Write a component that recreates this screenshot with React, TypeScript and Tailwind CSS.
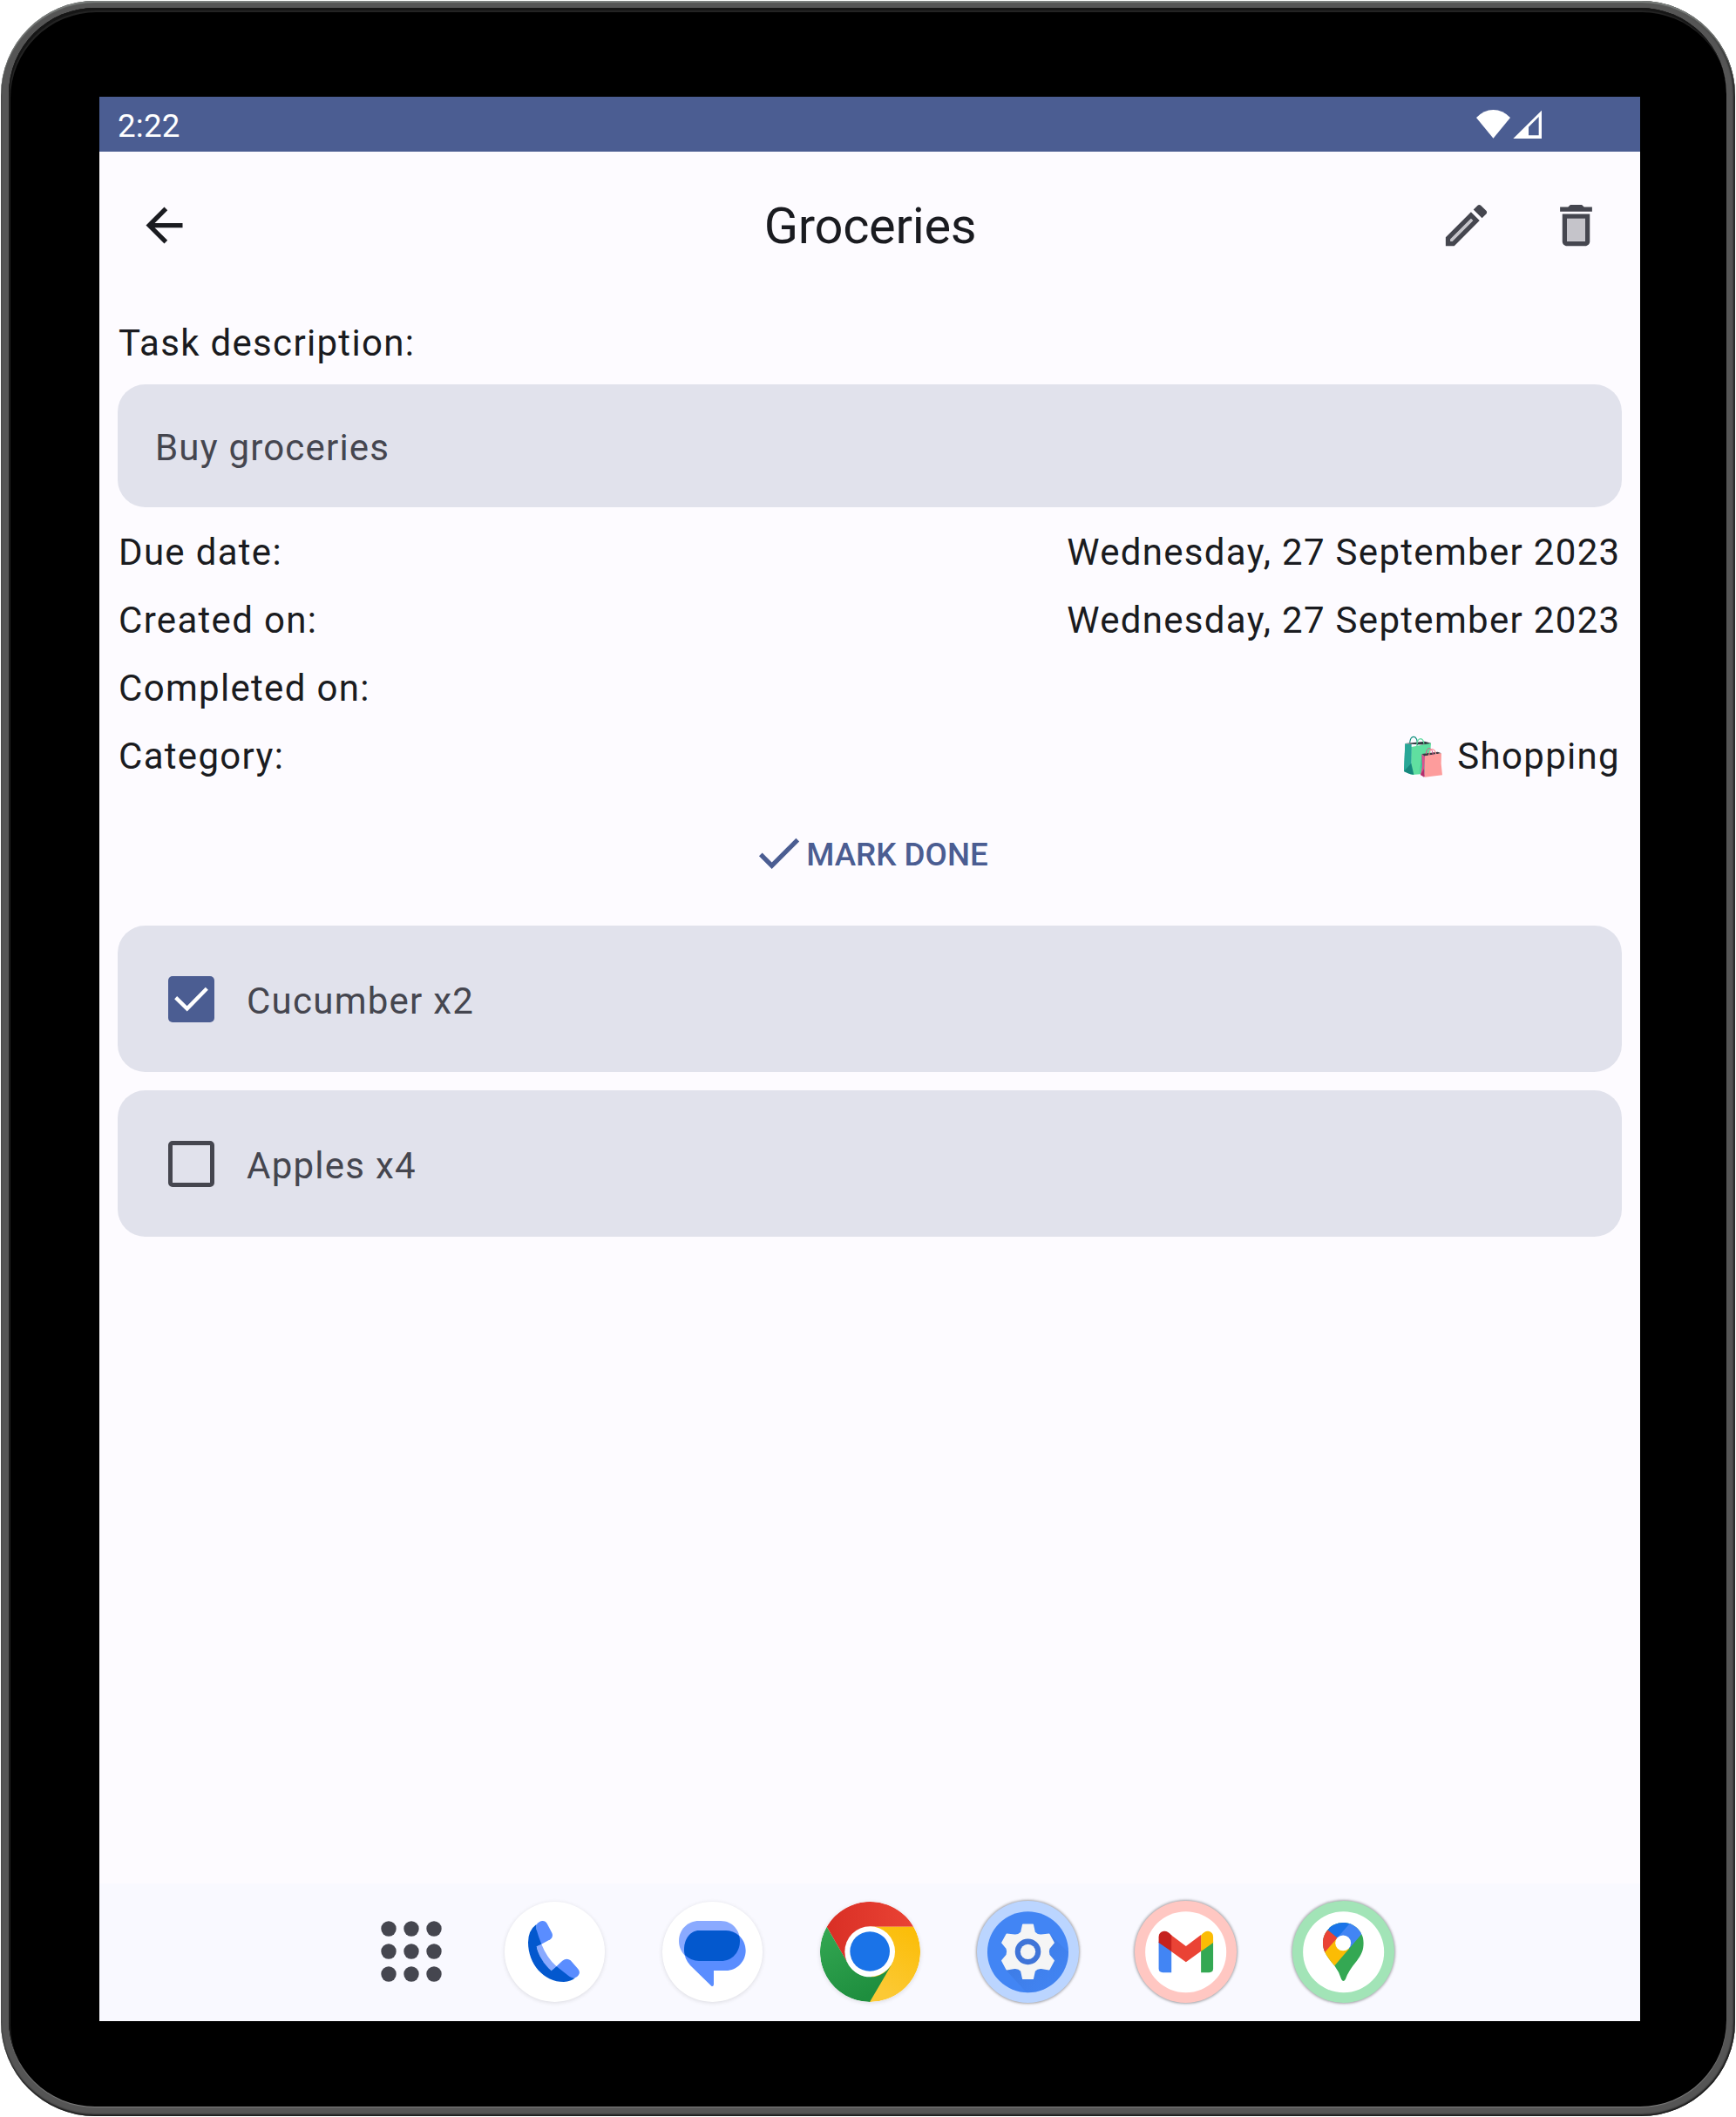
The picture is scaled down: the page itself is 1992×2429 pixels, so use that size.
import React from "react";

const details = [
  { label: "Due date:", value: "Wednesday, 27 September 2023" },
  { label: "Created on:", value: "Wednesday, 27 September 2023" },
  { label: "Completed on:", value: "" },
];

const items = [
  { label: "Cucumber x2", done: true },
  { label: "Apples x4", done: false },
];

function StatusIcons() {
  return (
    <svg className="mr-[113px] mb-[1px] h-[33px] w-[75px]" viewBox="282 105 225 99" fill="#fff">
      <path d="M282 132Q308 105 340.500 105T399 132L340.500 203Z" />
      <path fillRule="evenodd" d="M507 107V204H409ZM497 129L462 164V193H497Z" />
    </svg>
  );
}

function ShoppingBags() {
  return (
    <svg className="mr-[16px] h-[48px] w-[46px]" viewBox="33 21 138 144" fill="none">
      <path d="M56 46Q58 24 70 25Q82 26 83 55" stroke="#12917f" strokeWidth="3.500" />
      <path d="M40 49L62 50L61 155L36 144Z" fill="#28a797" />
      <path d="M62 50L40 48L108 41L129 47L126 54Z" fill="#323b41" />
      <path d="M62 60L129 47L126 90L105 153L61 156Z" fill="#60dfa0" />
      <path d="M40 49L62 60L61 118L36 144Z" fill="#28a797" />
      <path d="M61 116L70 156L50 151L36 144Z" fill="#16877d" />
      <path d="M80 62Q80 32 93 32Q103 33 105 50" stroke="#5fdca0" strokeWidth="3.500" />
      <path d="M97 85L105 86L106 164L94 156L98 120L88 154Q95 120 97 85Z" fill="#3cbf98" />
      <path d="M97 85L108 92L105 164L93 156L99 125Z" fill="#dd4f8e" />
      <path d="M105 135L108 163L93 156Z" fill="#b52d6c" />
      <path d="M98 84L152 77L165 82L108 92Z" fill="#3b3a42" />
      <path d="M108 91L165 82L164 118L168 157L107 164Z" fill="#fd9c9c" />
      <path d="M112 84Q114 63 124 65Q134 67 136 88" stroke="#e0568c" strokeWidth="3" />
      <path d="M122 90Q124 67 134 68Q143 70 146 84" stroke="#fb9298" strokeWidth="3.500" />
    </svg>
  );
}

function AppGrid() {
  return (
    <svg className="h-[70px] w-[70px]" viewBox="0 0 70 70" fill="#45464f">
      {[9, 35, 61].map((y) =>
        [9, 35, 61].map((x) => <circle key={`${x}-${y}`} cx={x} cy={y} r="8.700" />)
      )}
    </svg>
  );
}

function PhoneIcon() {
  return (
    <svg className="h-full w-full" viewBox="477 96 345 345">
      <path d="M586 176Q596 162 608 162Q618 162 623 171L640 203Q646 216 634 226L602 243L585 250Z" fill="#5a8dff" />
      <path d="M587 250L604 242Q622 288 656 319L636 334Q598 300 587 250Z" fill="#8aaaff" />
      <path d="M656 318L676 299Q691 288 704 298L729 326Q738 337 733 346Q728 358 712 359L660 350L637 334Z" fill="#5a8dff" />
      <path d="M586 174Q558 195 558 236C558 310 612 372 681 372Q706 371 720 358Q710 360 700 353L656 319L638 334C612 311 593 280 587 250L604 242Q593 215 586 190Z" fill="#0358ce" />
    </svg>
  );
}

function MessagesIcon() {
  return (
    <svg className="h-full w-full" viewBox="1020 96 345 345">
      <path d="M1146 162H1221C1262 162 1287 195 1287 231C1287 268 1262 300 1221 300H1146C1107 300 1077 270 1077 231C1077 192 1107 162 1146 162Z" fill="#8aaaff" />
      <path d="M1150 195H1239C1277 195 1307 226 1307 264C1307 302 1277 333 1239 333H1197V381Q1196 389 1189 386L1116 315Q1095 292 1095 262C1095 224 1116 195 1150 195Z" fill="#5a8dff" />
      <path d="M1147 195H1239Q1265 196 1284 213Q1287 222 1287 231C1287 268 1262 300 1221 300H1146Q1119 300 1098 280Q1095 272 1095 262C1095 224 1116 195 1147 195Z" fill="#0358ce" />
    </svg>
  );
}

function ChromeIcon() {
  return (
    <svg className="h-full w-full" viewBox="123 96 345 345">
      <defs>
        <linearGradient id="chrome-red" x1="0" x2="1" y1="0" y2="0">
          <stop stopColor="#d92f25" />
          <stop offset="1" stopColor="#ea4335" />
        </linearGradient>
        <linearGradient id="chrome-green" x1="0" x2="0.500" y1="0" y2="1">
          <stop stopColor="#34a853" />
          <stop offset="1" stopColor="#1e8e3e" />
        </linearGradient>
        <linearGradient id="chrome-yellow" x1="1" x2="0.600" y1="0" y2="1">
          <stop stopColor="#fbbc04" />
          <stop offset="1" stopColor="#fcc934" />
        </linearGradient>
      </defs>
      <path d="M295.500 268.500L220 311L146 182A172.500 172.500 0 0 1 445 182L295.500 182Z" fill="url(#chrome-red)" />
      <path d="M295.500 182H445A172.500 172.500 0 0 1 294 441L300 350L370 311L295.500 268.500Z" fill="url(#chrome-yellow)" />
      <path d="M146 182L220.600 311.500A86 86 0 0 0 370 311.500L294 441A172.500 172.500 0 0 1 146 182Z" fill="url(#chrome-green)" />
      <circle cx="294.500" cy="267.500" r="86.500" fill="#fff" />
      <circle cx="294.500" cy="267" r="68.500" fill="#1a73e8" />
    </svg>
  );
}

function SettingsIcon() {
  return (
    <svg className="h-full w-full" viewBox="662 92 352 351">
      <defs>
        <clipPath id="settings-disc">
          <circle cx="838" cy="268" r="140" />
        </clipPath>
        <linearGradient id="settings-shade" x1="0" x2="1" y1="0" y2="1">
          <stop stopColor="#356ac8" stopOpacity="0.600" />
          <stop offset="1" stopColor="#4285f4" stopOpacity="0" />
        </linearGradient>
      </defs>
      <circle cx="838" cy="268" r="140" fill="#4285f4" />
      <path clipPath="url(#settings-disc)" d="M912 205L1010 300V460H880L762 330Z" fill="url(#settings-shade)" />
      <g transform="translate(838 267)">
        <circle r="52" fill="#3f74d8" />
        <path
          fill="#f5f5f5"
          stroke="#f5f5f5"
          strokeWidth="5"
          strokeLinejoin="round"
          fillRule="evenodd"
          d="M-17 -93H17L23 -66Q32 -56 46 -57L73 -60L89 -31L73 -12Q68 0 73 12L89 31L73 61L46 57Q32 56 23 66L17 93H-17L-23 66Q-32 56 -46 57L-73 61L-89 31L-73 12Q-68 0 -73 -12L-89 -31L-73 -60L-46 -57Q-32 -56 -23 -66ZM0 -47A47 47 0 1 0 0 47A47 47 0 1 0 0 -47Z"
        />
        <circle r="26" fill="#f5f5f5" />
      </g>
    </svg>
  );
}

function GmailIcon() {
  return (
    <svg className="h-full w-full" viewBox="125 92 352 351">
      <circle cx="301.500" cy="268" r="140" fill="#fff" />
      <path d="M208 232L252 262V339H222Q208 339 208 325Z" fill="#4285f4" />
      <path d="M396 232L354 262V339H382Q396 339 396 325Z" fill="#34a853" />
      <path d="M354 210Q366 195 379 196Q396 199 396 216V236L354 266Z" fill="#fbbc04" />
      <path d="M250 209L302 248L354 209V265L302 303L250 265Z" fill="#ea4335" />
      <path d="M252 210Q240 195 226 196Q208 199 208 216V236L252 266Z" fill="#c5221f" />
    </svg>
  );
}

function MapsIcon() {
  return (
    <svg className="h-full w-full" viewBox="668 92 352 351">
      <defs>
        <clipPath id="maps-pin">
          <path d="M843 167C882 167 914 198 914 237C914 262 905 280 890 299Q860 335 851 362Q844 374 837 362Q829 336 813 315C792 290 773 268 773 237C773 198 804 167 843 167Z" />
        </clipPath>
      </defs>
      <circle cx="844.500" cy="268" r="140" fill="#fff" />
      <g clipPath="url(#maps-pin)">
        <path d="M760 150H930V390H760Z" fill="#34a853" />
        <path d="M780 184V150H880L843 237Z" fill="#1a73e8" />
        <path d="M867 168L930 150V180L906 207L864 256L822 220Z" fill="#4285f4" />
        <path d="M823 219L843 237L864 256L812 317L770 330V270Z" fill="#fbbc04" />
        <path d="M790 192L823 219L779 270L760 270V220Z" fill="#ea4335" />
      </g>
      <circle cx="843" cy="237" r="27" fill="#fff" />
    </svg>
  );
}

const plain = "h-[115px] w-[115px] shrink-0 overflow-hidden rounded-full bg-white shadow-[0_1px_5px_rgba(0,0,0,0.12)]";

function Dock() {
  return (
    <div className="flex h-[158px] shrink-0 items-center bg-[#f9f9ff] pb-[2px] pl-[322.500px]">
      <AppGrid />
      <div className="ml-[72.500px] flex items-center">
        <div className={plain}><PhoneIcon /></div>
        <div className={`${plain} ml-[66px]`}><MessagesIcon /></div>
        <div className={`${plain} ml-[66px]`}><ChromeIcon /></div>
        <div className="ml-[65px] h-[117px] w-[117px] shrink-0 rounded-full bg-[#bbd5ff] shadow-[0_0_3px_1px_rgba(0,0,0,0.35)]"><SettingsIcon /></div>
        <div className="ml-[64px] h-[117px] w-[117px] shrink-0 rounded-full bg-[#ffc7c2] shadow-[0_0_3px_1px_rgba(0,0,0,0.35)]"><GmailIcon /></div>
        <div className="ml-[64px] h-[117px] w-[117px] shrink-0 rounded-full bg-[#a2e4b7] shadow-[0_0_3px_1px_rgba(0,0,0,0.35)]"><MapsIcon /></div>
      </div>
    </div>
  );
}

export default function App() {
  return (
    <div className="h-[2429px] w-[1992px] bg-white p-px font-['Roboto',sans-serif]">
      <div className="h-[2427px] w-[1990px] rounded-[108px] bg-[#555] pt-[8px] pr-[10px] pb-[11px] pl-[9px] shadow-[inset_0_2px_1px_#7c807e,inset_0_-2px_2px_#1c1c1c,inset_-2px_0_2px_#222]">
        <div className="h-full w-full rounded-[99px] bg-black pt-[102px] pl-[104px] shadow-[inset_1px_3px_0_#161616,inset_2px_5px_0_#232323,0_1px_1px_#808080]">
          <main className="flex h-[2208px] w-[1768px] flex-col bg-[#fdfbff] text-[#1a1b20]">
            <div className="flex h-[63px] shrink-0 items-center justify-between bg-[#4b5d92] pl-[21px] text-[36.75px] text-white">
              <span className="pt-[5px] tracking-[0.2px]">2:22</span>
              <StatusIcons />
            </div>

            <header className="flex h-[168px] shrink-0 items-center justify-between pr-[42px] pl-[43px]">
              <div className="w-[189px]">
                <svg className="h-[63px] w-[63px]" viewBox="0 0 24 24" fill="#1a1b20">
                  <path d="M20 11H7.830l5.590-5.590L12 4l-8 8 8 8 1.410-1.410L7.830 13H20v-2z" />
                </svg>
              </div>
              <h1 className="pt-[3px] text-[57.75px] leading-[73px] tracking-[-0.3px]">Groceries</h1>
              <div className="flex gap-[63px] text-[#45464f]">
                <svg className="h-[63px] w-[63px]" viewBox="0 0 24 24" fill="currentColor">
                  <path opacity="0.300" d="M5 18.080V19h.920l9.060-9.060-.920-.920z" />
                  <path d="M3 17.250V21h3.750L17.810 9.940l-3.750-3.750L3 17.250zM5.920 19H5v-.920l9.060-9.060.920.920L5.920 19zM20.710 5.630l-2.340-2.340c-.2-.2-.45-.29-.71-.29s-.51.1-.7.290l-1.830 1.830 3.750 3.750 1.830-1.830c.39-.39.39-1.020 0-1.410z" />
                </svg>
                <svg className="h-[63px] w-[63px]" viewBox="0 0 24 24" fill="currentColor">
                  <path opacity="0.300" d="M8 9h8v10H8z" />
                  <path d="M15.500 4l-1-1h-5l-1 1H5v2h14V4zM6 19c0 1.100.9 2 2 2h8c1.100 0 2-.9 2-2V7H6v12zM8 9h8v10H8V9z" />
                </svg>
              </div>
            </header>

            <section className="flex grow flex-col px-[21px] pt-[20px] text-[42px] leading-[63px] tracking-[1.3125px]">
              <p className="pl-px">Task description:</p>
              <div className="mt-[16px] mb-[20px] h-[141px] rounded-[31.5px] bg-[#e1e2ec] px-[43px] pt-[41px] tracking-[1.2px] text-[#45464f]">
                Buy groceries
              </div>
              {details.map((d) => (
                <div key={d.label} className="flex h-[78px] shrink-0 justify-between pr-[1.5px] pl-px">
                  <span>{d.label}</span>
                  <span>{d.value}</span>
                </div>
              ))}
              <div className="flex h-[78px] shrink-0 items-start justify-between pr-[2px] pl-px">
                <span>Category:</span>
                <span className="flex h-[63px] items-center">
                  <ShoppingBags />
                  Shopping
                </span>
              </div>

              <button className="mt-[33px] mb-[52px] flex h-[63px] items-center justify-center text-[36.75px] font-medium tracking-normal text-[#4b5d92]">
                <svg className="h-[63px] w-[63px]" viewBox="0 0 24 24" fill="currentColor">
                  <path d="M9 16.170L4.830 12l-1.420 1.410L9 19 21 7l-1.410-1.410z" />
                </svg>
                <span className="pt-[3px]">MARK DONE</span>
              </button>

              <ul className="flex flex-col gap-[21px]">
                {items.map((item) => (
                  <li key={item.label} className="flex h-[168px] items-center rounded-[31.5px] bg-[#e1e2ec] pl-[58px] text-[#45464f]">
                    {item.done ? (
                      <span className="flex h-[53px] w-[53px] items-center justify-center rounded-[5px] bg-[#4b5d92]">
                        <svg className="h-[53px] w-[53px]" viewBox="219 240 159 159" fill="none" stroke="#fff" strokeWidth="13">
                          <path d="M245 314L284 352L352 283" />
                        </svg>
                      </span>
                    ) : (
                      <span className="h-[53px] w-[53px] rounded-[5px] border-[5px] border-[#45464f]" />
                    )}
                    <span className="ml-[37px] pt-[4px] tracking-[1.25px]">{item.label}</span>
                  </li>
                ))}
              </ul>
            </section>

            <Dock />
          </main>
        </div>
      </div>
    </div>
  );
}
